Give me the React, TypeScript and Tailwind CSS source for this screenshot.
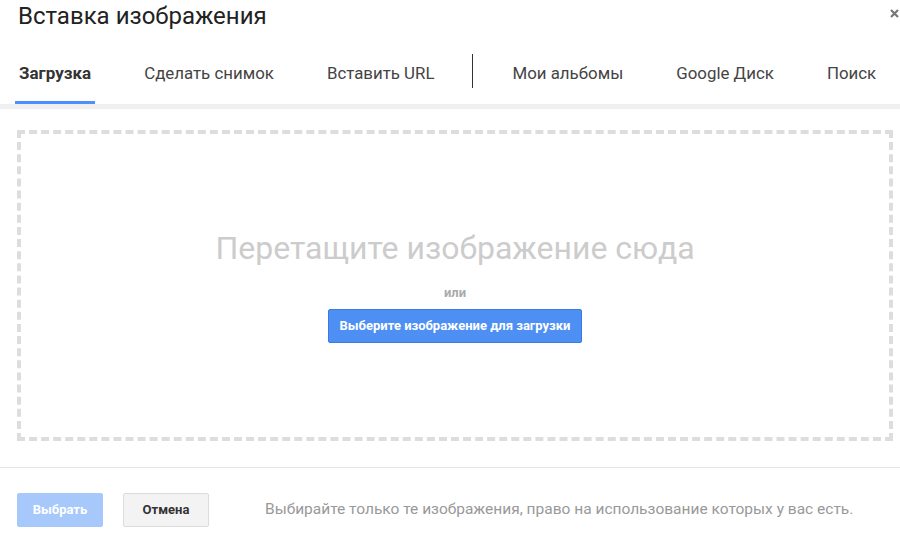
const tabs = [
  { label: "Загрузка", active: true },
  { label: "Сделать снимок" },
  { label: "Вставить URL" },
  { label: "|" },
  { label: "Мои альбомы" },
  { label: "Google Диск" },
  { label: "Поиск" },
];

export default function App() {
  return (
    <div className="w-[900px] h-[539px] bg-white overflow-hidden flex flex-col font-['Roboto',_'Liberation_Sans',_sans-serif]">
      {/* header */}
      <div className="relative flex items-start pl-[18px] h-[40px]">
        <h1 className="text-[24px] leading-[32px] text-[#222] font-normal">Вставка изображения</h1>
        <button className="absolute right-[1px] top-[9px] text-[#777]" title="Закрыть">
          <svg width="9" height="9" viewBox="0 0 9 9">
            <path d="M1 1 L8 8 M8 1 L1 8" stroke="currentColor" strokeWidth="2.2" />
          </svg>
        </button>
      </div>

      {/* tabs */}
      <div className="flex items-stretch h-[69px] pl-[15px] border-b-[5px] border-[#f0f0f0]">
        {tabs.map((tab, i) =>
          tab.label === "|" ? (
            <div key={i} className="shrink-0 flex items-center -ml-[11px] pr-[35px]">
              <div className="w-px h-[34px] bg-[#333] -mt-[2px]" />
            </div>
          ) : (
            <div
              key={i}
              className={
                "shrink-0 whitespace-nowrap flex items-center px-[4px] mr-[45px] border-b-[3px] " +
                (tab.active
                  ? "border-[#4d90fe] font-bold text-[#333] text-[17px]"
                  : "border-transparent text-[#444] text-[16.85px]")
              }
            >
              <span className="mt-[6px]">{tab.label}</span>
            </div>
          )
        )}
      </div>

      {/* drop zone */}
      <div className="pl-[17px] pr-[7px] pt-[21px]">
        <div className="h-[311px] border-4 border-dashed border-[#ddd] flex flex-col items-center">
          <p className="mt-[95px] text-[32px] leading-[38px] text-[#ccc] whitespace-nowrap">Перетащите изображение сюда</p>
          <p className="mt-[18px] text-[13px] font-bold text-[#aaa] leading-[16px]">или</p>
          <button className="mt-[8px] h-[34px] px-[11px] rounded-[2px] bg-[#4d8ff3] border border-[#3b7be0] text-white text-[13px] font-bold whitespace-nowrap">
            Выберите изображение для загрузки
          </button>
        </div>
      </div>

      {/* footer */}
      <div className="mt-[26px] border-t border-[#e5e5e5] flex items-center px-[17px] pt-[25px]">
        <button className="shrink-0 w-[86px] h-[34px] rounded-[2px] bg-[#a6c8fb] text-white text-[13px] font-bold">
          Выбрать
        </button>
        <button className="shrink-0 ml-[20px] w-[86px] h-[34px] rounded-[2px] bg-[#f3f3f3] border border-[#dcdcdc] text-[#333] text-[13px] font-bold">
          Отмена
        </button>
        <p className="ml-[56px] text-[15.5px] text-[#999] whitespace-nowrap">
          Выбирайте только те изображения, право на использование которых у вас есть.
        </p>
      </div>
    </div>
  );
}
